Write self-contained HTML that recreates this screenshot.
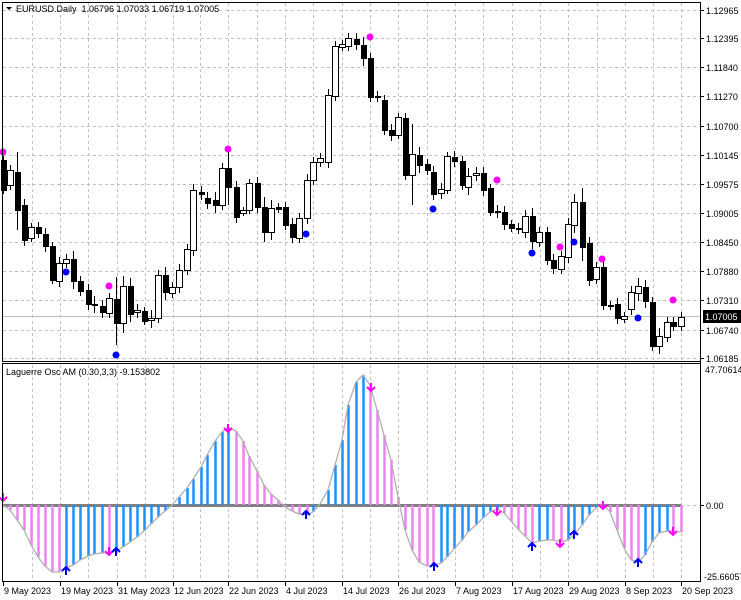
<!DOCTYPE html>
<html><head><meta charset="utf-8"><style>
html,body{margin:0;padding:0;background:#fff;width:741px;height:600px;overflow:hidden}
svg{display:block}
text{font-family:"Liberation Sans",sans-serif;font-size:10px;fill:#000}
text.d{font-size:9px}
</style></head><body>
<svg id="s" width="741" height="600" xmlns="http://www.w3.org/2000/svg"></svg>
<script>
var s=document.getElementById('s'),h='';
function L(x1,y1,x2,y2,c,w,d){h+='<line x1="'+x1+'" y1="'+y1+'" x2="'+x2+'" y2="'+y2+'" stroke="'+c+'" stroke-width="'+(w||1)+'"'+(d?' stroke-dasharray="'+d+'"':'')+'/>';}
function T(x,y,t,a){h+='<text x="'+x+'" y="'+y+'"'+(a?' '+a:'')+'>'+t+'</text>';}
var gx=[32,60,88,117,145,173,200,228,257,285,313,342,370,398,427,455,483,512,540,568,597,625,653,681];
var gy=[10,38,67,96,126,155,184,213,242,271,300,330,358];
gx.forEach(function(x){L(x+.5,3,x+.5,361,'#c0c0c0',1,'3,3');L(x+.5,365,x+.5,581,'#c0c0c0',1,'3,3');});
gy.forEach(function(y){L(3,y+.5,700,y+.5,'#c0c0c0',1,'3,3');});
var labs=['1.12965','1.12395','1.11840','1.11270','1.10700','1.10145','1.09575','1.09005','1.08450','1.07880','1.07310','1.06740','1.06185'];
gy.forEach(function(y,i){L(700,y+.5,704,y+.5,'#000');T(706,y+4,labs[i],'class="d"');});
L(3,316.5,700,316.5,'#c0c0c0');
var C=[[3,160,190],[10,185,170],[17,172,210],[24,205,240],[31,238,227],[38,227,233],[45,234,246],[52,246,280],[59,281,263],[66,263,259],[73,259,281],[80,281,291],[88,290,304],[94,304,305],[102,306,312],[109,313,298],[116,299,323],[123,323,286],[130,286,314],[137,312,310],[144,311,321],[151,320,318],[158,318,275],[165,275,292],[172,293,287],[179,287,270],[187,270,249],[193,250,190],[201,192,194],[207,198,203],[215,200,205],[222,205,168],[228,168,187],[236,187,217],[243,213,210],[249,210,183],[257,183,207],[264,207,232],[271,232,208],[278,207,209],[285,207,225],[292,224,237],[299,238,218],[307,218,180],[313,180,162],[320,162,158],[328,162,95],[335,96,46],[342,47,44],[348,46,38],[356,39,44],[363,45,58],[370,58,97],[377,96,97],[384,100,130],[391,130,135],[398,135,117],[405,118,175],[412,175,154],[419,155,165],[427,164,170],[433,172,194],[441,193,189],[447,190,156],[454,157,161],[462,161,185],[468,187,176],[476,175,173],[483,173,190],[490,188,212],[497,211,212],[504,212,224],[511,224,228],[518,228,229],[525,232,216],[532,216,241],[539,242,232],[547,232,260],[553,260,268],[561,269,256],[568,257,224],[574,225,202],[582,202,247],[589,243,280],[596,279,267],[603,267,305],[610,305,306],[617,304,318],[624,319,316],[631,309,292],[638,293,286],[645,287,301],[652,302,346],[659,346,336],[667,337,322],[673,322,326],[681,326,317]];
var ex=[4,5,20,6,4,5,6,4,6,5,8,5,6,8,6,5,22,10,8,6,4,8,5,8,5,6,5,6,6,6,8,5,18,6,3,4,6,10,8,4,5,6,5,6,5,5,6,5,4,5,6,8,5,5,5,6,4,5,30,8,5,6,6,4,6,5,8,6,6,4,6,6,4,5,6,8,5,5,6,5,6,8,14,6,5,5,4,6,4,6,8,7,5,8,5,5];
C.forEach(function(c,i){var t=Math.min(c[1],c[2]),b=Math.max(c[1],c[2]),e=ex[i]||5;
L(c[0]+.5,t-e,c[0]+.5,b+e,'#000');
if(b-t<1)b=t+1;
if(c[2]<c[1])h+='<rect x="'+(c[0]-2.5)+'" y="'+(t+.5)+'" width="6" height="'+(b-t)+'" fill="#fff" stroke="#000"/>';
else h+='<rect x="'+(c[0]-2)+'" y="'+t+'" width="6" height="'+(b-t+1)+'" fill="#000"/>';});
[[3,152],[109,286],[228,149],[370,37],[497,180],[560,247],[602,259],[673,300]].forEach(function(d){h+='<circle cx="'+d[0]+'" cy="'+d[1]+'" r="3.5" fill="#f0f"/>';});
[[66,272],[116,355],[306,234],[433,209],[532,253],[574,242],[638,318]].forEach(function(d){h+='<circle cx="'+d[0]+'" cy="'+d[1]+'" r="3.5" fill="#00f"/>';});
var V=[505,510,520,530,545,557,566,572,572,568,565,560,556,554,553,553,551,547,542,537,531,524,517,511,505,497,488,479,467,455,441,432,427,431,441,456,471,485,494,500,507,511,514,515,512,504,490,465,440,405,382,375,385,410,435,460,497,530,550,562,566,566,563,557,549,540,532,525,518,512,509,513,521,529,536,543,541,540,540,542,540,535,525,515,508,504,512,530,548,560,562,555,542,533,531,531,532];
var X=C.map(function(c){return c[0];});
L(3,505.5,681,505.5,'#808080',3);L(681,505.5,700,505.5,'#c0c0c0',1,'3,3');
V.forEach(function(v,i){var col=(i>0&&v<V[i-1])?'#1e90ff':'#ee82ee';
if(Math.abs(v-505)>1)L(X[i]+.5,505,X[i]+.5,v,col,2.5);});
var p='M'+X[0]+' '+V[0];for(var i=1;i<V.length;i++)p+=' L'+X[i]+' '+V[i];
h+='<path d="'+p+'" fill="none" stroke="#b0b0b0" stroke-width="1.3"/>';
function dn(x,y){h+='<path d="M'+x+' '+(y-8)+' V'+y+' M'+(x-4)+' '+(y-4)+' L'+x+' '+y+' L'+(x+4)+' '+(y-4)+'" fill="none" stroke="#f0f" stroke-width="2"/>';}
function up(x,y){h+='<path d="M'+x+' '+(y+8)+' V'+y+' M'+(x-4)+' '+(y+4)+' L'+x+' '+y+' L'+(x+4)+' '+(y+4)+'" fill="none" stroke="#00f" stroke-width="2"/>';}
[[3,501],[228,432],[371,391],[497,515],[560,547],[603,509],[673,535],[109,555]].forEach(function(a){dn(a[0],a[1]);});
[[66,567],[116,548],[306,511],[434,563],[532,543],[574,531],[638,559]].forEach(function(a){up(a[0],a[1]);});
h+='<rect x="2.5" y="2.5" width="698" height="359" fill="none" stroke="#000"/>';
h+='<rect x="2.5" y="363.5" width="698" height="218" fill="none" stroke="#000"/>';
L(700.5,2,700.5,582,'#000');
h+='<rect x="703" y="310" width="38" height="13" fill="#000"/>';
T(705,320,'1.07005','class="d" style="fill:#fff"');
T(705,373,'47.70614','class="d"');T(706,509,'0.00','class="d"');L(700,505.5,704,505.5,'#000');T(704,580,'-25.66057','class="d"');
h+='<path d="M6 7 L12 7 L9 10 Z" fill="#000"/>';
T(16,12,'EURUSD.Daily&#160;&#160;1.06796 1.07033 1.06719 1.07005','class="d"');
T(6,375,'Laguerre Osc AM (0.30,3,3) -9.153802','class="d"');
[[3,'9 May 2023'],[60,'19 May 2023'],[117,'31 May 2023'],[173,'12 Jun 2023'],[228,'22 Jun 2023'],[285,'4 Jul 2023'],[342,'14 Jul 2023'],[398,'26 Jul 2023'],[455,'7 Aug 2023'],[512,'17 Aug 2023'],[568,'29 Aug 2023'],[625,'8 Sep 2023'],[681,'20 Sep 2023']].forEach(function(d){L(d[0]+.5,582,d[0]+.5,586,'#000');T(d[0]+1,594,d[1],'class="d"');});
s.innerHTML=h;
</script>
</body></html>
